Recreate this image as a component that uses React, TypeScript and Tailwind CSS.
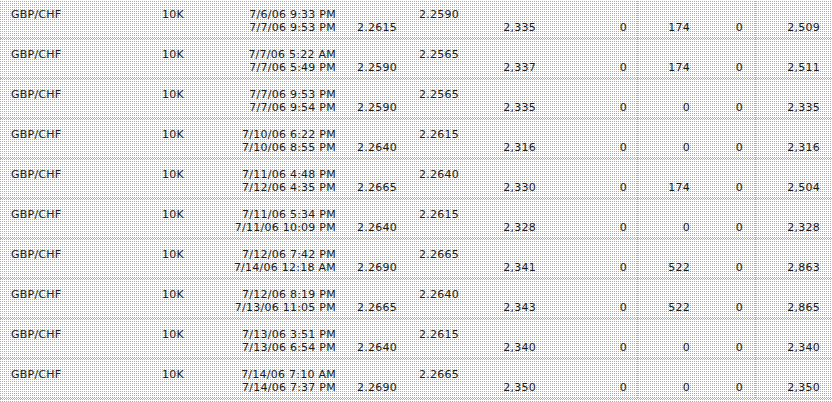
import React from "react";

type Row = {
  open: string;
  close: string;
  entry: string;
  exit: string;
  pl: string;
  a: string;
  b: string;
  c: string;
  total: string;
};

const rows: Row[] = [
  { open: "7/6/06 9:33 PM", close: "7/7/06 9:53 PM", entry: "2.2615", exit: "2.2590", pl: "2,335", a: "0", b: "174", c: "0", total: "2,509" },
  { open: "7/7/06 5:22 AM", close: "7/7/06 5:49 PM", entry: "2.2590", exit: "2.2565", pl: "2,337", a: "0", b: "174", c: "0", total: "2,511" },
  { open: "7/7/06 9:53 PM", close: "7/7/06 9:54 PM", entry: "2.2590", exit: "2.2565", pl: "2,335", a: "0", b: "0", c: "0", total: "2,335" },
  { open: "7/10/06 6:22 PM", close: "7/10/06 8:55 PM", entry: "2.2640", exit: "2.2615", pl: "2,316", a: "0", b: "0", c: "0", total: "2,316" },
  { open: "7/11/06 4:48 PM", close: "7/12/06 4:35 PM", entry: "2.2665", exit: "2.2640", pl: "2,330", a: "0", b: "174", c: "0", total: "2,504" },
  { open: "7/11/06 5:34 PM", close: "7/11/06 10:09 PM", entry: "2.2640", exit: "2.2615", pl: "2,328", a: "0", b: "0", c: "0", total: "2,328" },
  { open: "7/12/06 7:42 PM", close: "7/14/06 12:18 AM", entry: "2.2690", exit: "2.2665", pl: "2,341", a: "0", b: "522", c: "0", total: "2,863" },
  { open: "7/12/06 8:19 PM", close: "7/13/06 11:05 PM", entry: "2.2665", exit: "2.2640", pl: "2,343", a: "0", b: "522", c: "0", total: "2,865" },
  { open: "7/13/06 3:51 PM", close: "7/13/06 6:54 PM", entry: "2.2640", exit: "2.2615", pl: "2,340", a: "0", b: "0", c: "0", total: "2,340" },
  { open: "7/14/06 7:10 AM", close: "7/14/06 7:37 PM", entry: "2.2690", exit: "2.2665", pl: "2,350", a: "0", b: "0", c: "0", total: "2,350" },
];

const cellBorder = "border-r border-dotted border-[#b4b4b4]";

export default function App() {
  return (
    <div
      className="w-[832px] h-[402px] overflow-hidden text-[11px] leading-[13px] tracking-[0.25px] text-[#1a1a1a] font-['DejaVu_Sans','Verdana',sans-serif] bg-[#ffffff] bg-[image:linear-gradient(to_bottom,#ffffff_50%,transparent_50%),linear-gradient(to_right,#b2a8b2_50%,#ffffff_50%)] bg-[length:2px_2px]"
    >
      <div className="-mt-px flex flex-col">
        {rows.map((r, i) => (
          <div
            key={i}
            className="grid grid-cols-[149px_260px_229px_65px_53px_1fr] h-[40px] border-b border-dotted border-[#b4b4b4]"
          >
            <div className={`${cellBorder} pl-[11px] pt-[9px]`}>GBP/CHF</div>
            <div className={`${cellBorder} flex pl-[13px] pr-[11px] pt-[9px]`}>
              <div className="flex-1">10K</div>
              <div className="flex flex-col items-end whitespace-nowrap">
                <span>{r.open}</span>
                <span>{r.close}</span>
              </div>
              <div className="w-[61px] flex flex-col items-end">
                <span>&nbsp;</span>
                <span>{r.entry}</span>
              </div>
            </div>
            <div className={`${cellBorder} flex pl-[10px] pr-[10px] pt-[9px]`}>
              <div className="flex-1">{r.exit}</div>
              <div className="flex flex-col items-end">
                <span>&nbsp;</span>
                <span>{r.pl}</span>
              </div>
              <div className="w-[91px] flex flex-col items-end">
                <span>&nbsp;</span>
                <span>{r.a}</span>
              </div>
            </div>
            <div className={`${cellBorder} flex flex-col items-end pr-[12px] pt-[9px]`}>
              <span>&nbsp;</span>
              <span>{r.b}</span>
            </div>
            <div className={`${cellBorder} flex flex-col items-end pr-[12px] pt-[9px]`}>
              <span>&nbsp;</span>
              <span>{r.c}</span>
            </div>
            <div className="flex flex-col items-end pr-[12px] pt-[9px]">
              <span>&nbsp;</span>
              <span>{r.total}</span>
            </div>
          </div>
        ))}
      </div>
    </div>
  );
}
